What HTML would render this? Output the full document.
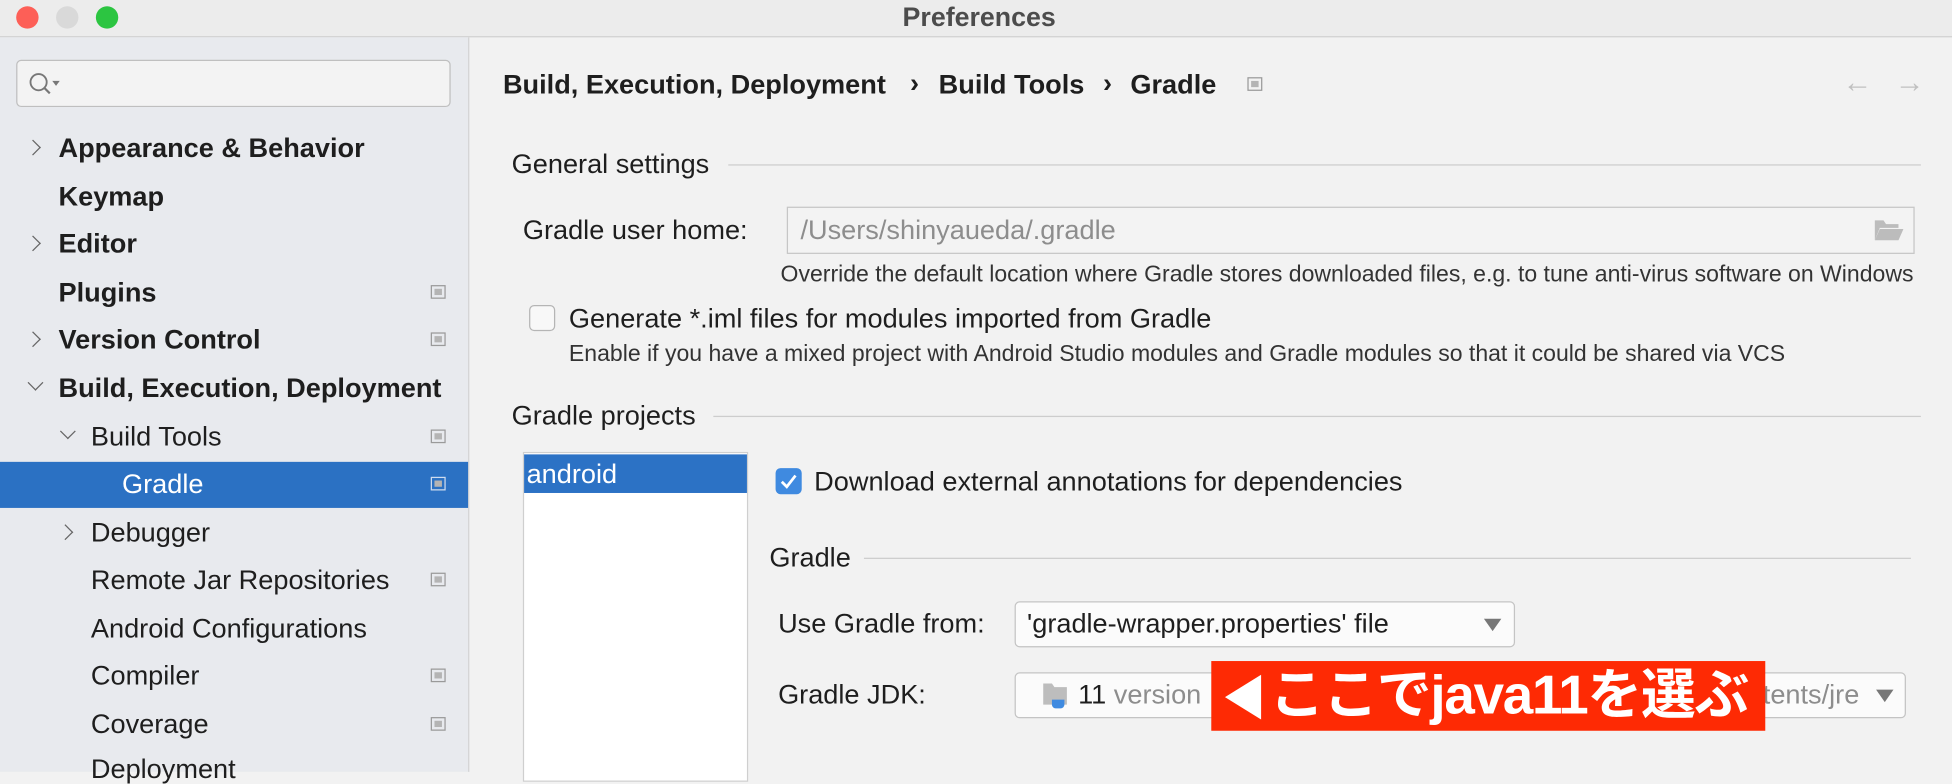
<!DOCTYPE html>
<html><head><meta charset="utf-8">
<style>
html,body{margin:0;padding:0;width:1952px;height:766px;overflow:hidden;background:#f2f2f2}
#w{position:absolute;left:0;top:0;width:1568px;height:620px;transform:scale(1.2449);transform-origin:0 0;font-family:"Liberation Sans","Noto Sans CJK JP",sans-serif;color:#1e1e1e}
.a{position:absolute;white-space:nowrap}
.t{font-size:21.8px;line-height:24px}
.b{font-weight:bold}
.s{font-size:18.5px;line-height:20px;color:#333}
.ic{position:absolute;width:12px;height:11px;border:1px solid #9a9a9a;box-sizing:border-box}
.ic:after{content:"";position:absolute;left:2px;top:2px;width:6px;height:5px;background:#b4b4b4}
.ln{position:absolute;height:1px;background:#cdcdcd}
.ch{position:absolute;width:8px;height:8px;border-right:1.6px solid #666;border-bottom:1.6px solid #666}
</style></head><body><div id="w">
<div class="a" style="left:0;top:0;width:1568px;height:29px;background:#ececec;border-bottom:1px solid #d2d2d2"></div>
<div class="a" style="left:13px;top:5px;width:18px;height:18px;border-radius:50%;background:#fd5f57"></div>
<div class="a" style="left:45px;top:5px;width:18px;height:18px;border-radius:50%;background:#d9d9d9"></div>
<div class="a" style="left:77px;top:5px;width:18px;height:18px;border-radius:50%;background:#2cc541"></div>
<div class="a b" style="left:725px;top:2px;font-size:21.5px;line-height:24px;color:#4c4c4c">Preferences</div>
<div class="a" style="left:0;top:30px;width:376px;height:590px;background:#e8eaee;border-right:1px solid #d3d3d3"></div>
<div class="a" style="left:13px;top:48px;width:349px;height:38px;box-sizing:border-box;border:1px solid #bfbfbf;border-radius:4px;background:#f3f3f3"></div>
<svg class="a" style="left:21px;top:56px" width="30" height="22"><circle cx="10" cy="10" r="6.5" fill="none" stroke="#777" stroke-width="1.5"/><line x1="14.5" y1="14.5" x2="19" y2="19" stroke="#777" stroke-width="1.8"/><path d="M21 9h6l-3 4z" fill="#777"/></svg>
<div class="a" style="left:0;top:371px;width:376px;height:37px;background:#2b71c3"></div>
<div class="ch" style="left:22px;top:114px;transform:rotate(-45deg)"></div>
<div class="ch" style="left:22px;top:191px;transform:rotate(-45deg)"></div>
<div class="ch" style="left:22px;top:268px;transform:rotate(-45deg)"></div>
<div class="ch" style="left:24px;top:303px;transform:rotate(45deg)"></div>
<div class="ch" style="left:50px;top:342px;transform:rotate(45deg)"></div>
<div class="ch" style="left:48px;top:423px;transform:rotate(-45deg)"></div>
<div class="a t b" style="left:47px;top:107px">Appearance &amp; Behavior</div>
<div class="a t b" style="left:47px;top:146px">Keymap</div>
<div class="a t b" style="left:47px;top:184px">Editor</div>
<div class="a t b" style="left:47px;top:223px">Plugins</div>
<div class="a t b" style="left:47px;top:261px">Version Control</div>
<div class="a t b" style="left:47px;top:300px">Build, Execution, Deployment</div>
<div class="a t" style="left:73px;top:339px">Build Tools</div>
<div class="a t" style="left:98px;top:377px;color:#fff">Gradle</div>
<div class="a t" style="left:73px;top:416px">Debugger</div>
<div class="a t" style="left:73px;top:454px">Remote Jar Repositories</div>
<div class="a t" style="left:73px;top:493px">Android Configurations</div>
<div class="a t" style="left:73px;top:531px">Compiler</div>
<div class="a t" style="left:73px;top:570px">Coverage</div>
<div class="a t" style="left:73px;top:606px">Deployment</div>
<div class="ic" style="left:346px;top:229px"></div>
<div class="ic" style="left:346px;top:267px"></div>
<div class="ic" style="left:346px;top:345px"></div>
<div class="ic" style="left:346px;top:383px;border-color:#cfdcef"></div>
<div class="ic" style="left:346px;top:460px"></div>
<div class="ic" style="left:346px;top:537px"></div>
<div class="ic" style="left:346px;top:576px"></div>
<div class="a t b" style="left:404px;top:56px">Build, Execution, Deployment</div>
<div class="a t b" style="left:731px;top:55px">›</div>
<div class="a t b" style="left:754px;top:56px">Build Tools</div>
<div class="a t b" style="left:886px;top:55px">›</div>
<div class="a t b" style="left:908px;top:56px">Gradle</div>
<div class="ic" style="left:1002px;top:62px"></div>
<div class="a" style="left:1480px;top:53px;font-size:24px;color:#c0c0c0">←</div>
<div class="a" style="left:1522px;top:53px;font-size:24px;color:#c0c0c0">→</div>
<div class="a t" style="left:411px;top:120px">General settings</div>
<div class="ln" style="left:585px;top:132px;width:958px"></div>
<div class="a t" style="left:420px;top:173px">Gradle user home:</div>
<div class="a" style="left:632px;top:166px;width:906px;height:38px;box-sizing:border-box;border:1px solid #c6c6c6;background:#f3f3f3"></div>
<div class="a t" style="left:643px;top:173px;color:#8d8d8d">/Users/shinyaueda/.gradle</div>
<svg class="a" style="left:1505px;top:176px" width="24" height="18"><path d="M1 1h7l2 3h10v3H5L1 17z" fill="#bcbcbc"/><path d="M5 8h19l-4 9H1z" fill="#bcbcbc"/></svg>
<div class="a s" style="left:627px;top:210px">Override the default location where Gradle stores downloaded files, e.g. to tune anti-virus software on Windows</div>
<div class="a" style="left:425px;top:245px;width:21px;height:21px;box-sizing:border-box;border:1px solid #b5b5b5;border-radius:4px;background:#f8f8f8"></div>
<div class="a t" style="left:457px;top:244px">Generate *.iml files for modules imported from Gradle</div>
<div class="a s" style="left:457px;top:274px">Enable if you have a mixed project with Android Studio modules and Gradle modules so that it could be shared via VCS</div>
<div class="a t" style="left:411px;top:322px">Gradle projects</div>
<div class="ln" style="left:573px;top:334px;width:970px"></div>
<div class="a" style="left:420px;top:363px;width:181px;height:265px;box-sizing:border-box;border:1px solid #cfcfcf;background:#fff"></div>
<div class="a" style="left:421px;top:365px;width:179px;height:31px;background:#2c72c5"></div>
<div class="a t" style="left:423px;top:369px;color:#fff">android</div>
<div class="a" style="left:623px;top:376px;width:21px;height:21px;border-radius:4px;background:#3f8ae0"></div>
<svg class="a" style="left:623px;top:376px" width="21" height="21"><path d="M5 11l4 4 7-9" fill="none" stroke="#fff" stroke-width="2.2"/></svg>
<div class="a t" style="left:654px;top:375px">Download external annotations for dependencies</div>
<div class="a t" style="left:618px;top:436px">Gradle</div>
<div class="ln" style="left:694px;top:448px;width:841px"></div>
<div class="a t" style="left:625px;top:489px">Use Gradle from:</div>
<div class="a" style="left:815px;top:483px;width:402px;height:37px;box-sizing:border-box;border:1px solid #c4c4c4;border-radius:4px;background:#fbfbfb"></div>
<div class="a t" style="left:825px;top:489px">'gradle-wrapper.properties' file</div>
<svg class="a" style="left:1191px;top:496px" width="16" height="12"><path d="M1 1h14l-7 10z" fill="#777"/></svg>
<div class="a t" style="left:625px;top:546px">Gradle JDK:</div>
<div class="a" style="left:815px;top:540px;width:716px;height:37px;box-sizing:border-box;border:1px solid #c4c4c4;border-radius:4px;background:#fbfbfb"></div>
<svg class="a" style="left:837px;top:547px" width="26" height="24"><path d="M1 2h7l2 3h10v14H1z" fill="#bdbdbd"/><path d="M8 15h10v4a3 3 0 0 1-3 3h-4a3 3 0 0 1-3-3z" fill="#3f8ae0"/></svg>
<div class="a t" style="left:866px;top:546px">11 <span style="color:#8d8d8d">version</span></div>
<div class="a t" style="left:1416px;top:546px;color:#8d8d8d">tents/jre</div>
<svg class="a" style="left:1506px;top:553px" width="16" height="12"><path d="M1 1h14l-7 10z" fill="#777"/></svg>
<div class="a" style="left:973px;top:531px;width:445px;height:56px;background:#fe2a04"></div>
<svg class="a" style="left:980px;top:540px" width="36" height="40"><path d="M33 2L4 20l29 18z" fill="#fff"/></svg>
<div class="a b" style="left:1020px;top:531px;font-size:44px;line-height:56px;color:#fff;letter-spacing:-1px">ここでjava11を選ぶ</div>
</div></body></html>
